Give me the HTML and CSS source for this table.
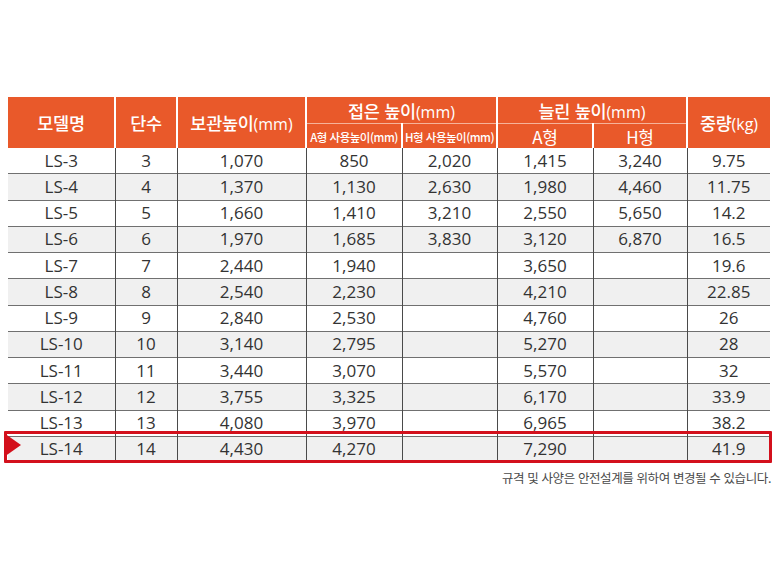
FILE: index.html
```html
<!DOCTYPE html>
<html lang="ko">
<head>
<meta charset="utf-8">
<link rel="stylesheet" href="styles.css">
</head>
<body>
<div class="page">
  <div class="wrap">
    <table class="spec">
      <colgroup>
        <col class="c1"><col class="c2"><col class="c3"><col class="c4"><col class="c5"><col class="c6"><col class="c7"><col class="c8">
      </colgroup>
      <thead>
        <tr class="h1">
          <th rowspan="2" class="first">모델명</th>
          <th rowspan="2">단수</th>
          <th rowspan="2">보관높이<span class="u">(mm)</span></th>
          <th colspan="2">접은 높이<span class="u">(mm)</span></th>
          <th colspan="2">늘린 높이<span class="u">(mm)</span></th>
          <th rowspan="2">중량<span class="u">(kg)</span></th>
        </tr>
        <tr class="h2">
          <th class="small">A형 사용높이(mm)</th>
          <th class="small">H형 사용높이(mm)</th>
          <th class="type">A형</th>
          <th class="type">H형</th>
        </tr>
      </thead>
      <tbody>
        <tr><td class="first">LS-3</td><td>3</td><td>1,070</td><td>850</td><td>2,020</td><td>1,415</td><td>3,240</td><td>9.75</td></tr>
        <tr><td class="first">LS-4</td><td>4</td><td>1,370</td><td>1,130</td><td>2,630</td><td>1,980</td><td>4,460</td><td>11.75</td></tr>
        <tr><td class="first">LS-5</td><td>5</td><td>1,660</td><td>1,410</td><td>3,210</td><td>2,550</td><td>5,650</td><td>14.2</td></tr>
        <tr><td class="first">LS-6</td><td>6</td><td>1,970</td><td>1,685</td><td>3,830</td><td>3,120</td><td>6,870</td><td>16.5</td></tr>
        <tr><td class="first">LS-7</td><td>7</td><td>2,440</td><td>1,940</td><td></td><td>3,650</td><td></td><td>19.6</td></tr>
        <tr><td class="first">LS-8</td><td>8</td><td>2,540</td><td>2,230</td><td></td><td>4,210</td><td></td><td>22.85</td></tr>
        <tr><td class="first">LS-9</td><td>9</td><td>2,840</td><td>2,530</td><td></td><td>4,760</td><td></td><td>26</td></tr>
        <tr><td class="first">LS-10</td><td>10</td><td>3,140</td><td>2,795</td><td></td><td>5,270</td><td></td><td>28</td></tr>
        <tr><td class="first">LS-11</td><td>11</td><td>3,440</td><td>3,070</td><td></td><td>5,570</td><td></td><td>32</td></tr>
        <tr><td class="first">LS-12</td><td>12</td><td>3,755</td><td>3,325</td><td></td><td>6,170</td><td></td><td>33.9</td></tr>
        <tr><td class="first">LS-13</td><td>13</td><td>4,080</td><td>3,970</td><td></td><td>6,965</td><td></td><td>38.2</td></tr>
        <tr class="last"><td class="first">LS-14</td><td>14</td><td>4,430</td><td>4,270</td><td></td><td>7,290</td><td></td><td>41.9</td></tr>
      </tbody>
    </table>
    <div class="highlight"></div>
    <div class="arrow"></div>
  </div>
  <p class="note">규격 및 사양은 안전설계를 위하여 변경될 수 있습니다.</p>
</div>
</body>
</html>
```
FILE: styles.css
```css
html, body {
  margin: 0;
  padding: 0;
  background: #ffffff;
}
body {
  font-family: "Open Sans", "Noto Sans CJK KR", sans-serif;
  color: #333333;
}
.page {
  padding: 97px 8px 0 8px;
}
.wrap {
  position: relative;
  width: 762px;
}
.spec {
  width: 762px;
  border-collapse: collapse;
  table-layout: fixed;
}
.c1 { width: 107px; }
.c2 { width: 62px; }
.c3 { width: 129px; }
.c4 { width: 96px; }
.c5 { width: 95px; }
.c6 { width: 96px; }
.c7 { width: 94px; }
.c8 { width: 83px; }

.spec th {
  background: #e9592a;
  color: #ffffff;
  font-family: "Noto Sans CJK KR", "Open Sans", sans-serif;
  font-weight: 500;
  font-size: 17.5px;
  letter-spacing: -0.3px;
  padding: 0;
  border-left: 2px solid #ffffff;
  text-align: center;
  vertical-align: middle;
}
.spec th.first { border-left: 0; }
.spec th .u {
  font-family: "Open Sans", sans-serif;
  font-weight: 400;
  font-size: 16px;
  letter-spacing: 0;
}
.h1 th { height: 26px; }
.h1 th[colspan] { border-bottom: 1px solid #f6b39a; }
.h2 th { height: 23px; line-height: 20px; padding-top: 1px; }
.spec th.type {
  font-weight: 400;
  font-size: 17px;
}
.spec th.small {
  font-size: 11.5px;
  font-weight: 500;
  letter-spacing: -0.5px;
  white-space: nowrap;
}

.spec td {
  height: 25.25px;
  padding: 0;
  text-align: center;
  vertical-align: middle;
  font-size: 17px;
  line-height: 20px;
  border-left: 1px solid #4a4a4a;
  border-top: 1px solid #707070;
  color: #333333;
}
.spec td.first { border-left: 0; }
.spec tbody tr:first-child td { border-top: 0; }
.spec tbody tr:nth-child(even) td { background: #f0f0f0; }

.highlight {
  position: absolute;
  left: -4px;
  top: 334px;
  width: 762px;
  height: 26px;
  border: 3px solid #d3101c;
  border-radius: 1px;
  pointer-events: none;
}
.arrow {
  position: absolute;
  left: -4px;
  top: 336px;
  width: 0;
  height: 0;
  border-left: 17px solid #d3101c;
  border-top: 12px solid transparent;
  border-bottom: 12px solid transparent;
}
.note {
  margin: 8px 0 0 0;
  text-align: right;
  font-family: "Noto Sans CJK KR", sans-serif;
  font-size: 12.5px;
  letter-spacing: -0.4px;
  color: #4a4a4a;
  line-height: 16px;
}
```
